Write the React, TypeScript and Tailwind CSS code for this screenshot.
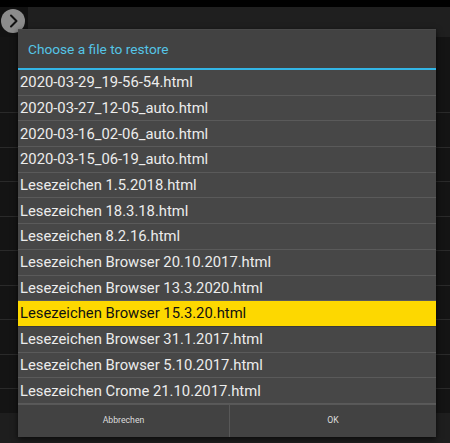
const files = [
  "2020-03-29_19-56-54.html",
  "2020-03-27_12-05_auto.html",
  "2020-03-16_02-06_auto.html",
  "2020-03-15_06-19_auto.html",
  "Lesezeichen 1.5.2018.html",
  "Lesezeichen 18.3.18.html",
  "Lesezeichen 8.2.16.html",
  "Lesezeichen Browser 20.10.2017.html",
  "Lesezeichen Browser 13.3.2020.html",
  "Lesezeichen Browser 15.3.20.html",
  "Lesezeichen Browser 31.1.2017.html",
  "Lesezeichen Browser 5.10.2017.html",
  "Lesezeichen Crome 21.10.2017.html",
];

const selected = "Lesezeichen Browser 15.3.20.html";

function BackRows() {
  return (
    <div className="h-[376px] overflow-hidden bg-[#141414]">
      <div className="h-[75px]" />
      {Array.from({ length: 9 }).map((_, i) => (
        <div key={i} className="h-[34.5px] border-t border-[#2a2a2a]" />
      ))}
    </div>
  );
}

export default function App() {
  return (
    <div className="relative h-[443px] w-[450px] overflow-hidden bg-[#1e1e1e] font-['Roboto',sans-serif]">
      {/* background screen */}
      <div className="h-[7px] bg-black" />
      <div className="flex h-[30px]">
        <div className="w-[28px] bg-[#121212]" />
        <div className="flex-1 bg-[#1f1f1f]" />
      </div>
      <BackRows />

      <button
        type="button"
        className="absolute left-[1px] top-[9px] flex h-[24px] w-[24px] items-center justify-center rounded-full bg-[#8c8c8c]"
      >
        <svg width="16" height="16" viewBox="0 0 16 16" fill="none">
          <polyline points="6,2.5 11.5,8 6,13.5" stroke="#111" strokeWidth="2" strokeLinecap="round" strokeLinejoin="round" />
        </svg>
      </button>

      {/* dialog */}
      <div className="absolute left-[18px] top-[29px] flex h-[408px] w-[418px] flex-col bg-[#424242] shadow-[0_2px_6px_rgba(0,0,0,0.7)]">
        <div className="flex h-[39px] items-center border-t border-[#4a4a4a] pl-[10px] text-[13.7px] text-[#55c5e6]">
          Choose a file to restore
        </div>
        <div className="h-[2px] bg-[#33b5e5]" />
        <div className="flex flex-col">
          {files.map((name) => {
            const active = name === selected;
            return (
              <div
                key={name}
                className={
                  active
                    ? "flex h-[25.7px] items-center border-b border-[#3a3a3a] bg-[#fdd800] pl-[2px] text-[14.8px] text-[#111]"
                    : "flex h-[25.7px] items-center border-b border-[#5a5a5a] bg-[#474747] pl-[2px] text-[14.8px] text-[#ececec]"
                }
              >
                {name}
              </div>
            );
          })}
        </div>
        <div className="flex flex-1 border-t border-[#585858] text-[8.7px] text-[#dcdcdc]">
          <div className="flex w-[212px] items-center justify-center border-r border-[#585858]">Abbrechen</div>
          <div className="flex flex-1 items-center justify-center">OK</div>
        </div>
      </div>
    </div>
  );
}
